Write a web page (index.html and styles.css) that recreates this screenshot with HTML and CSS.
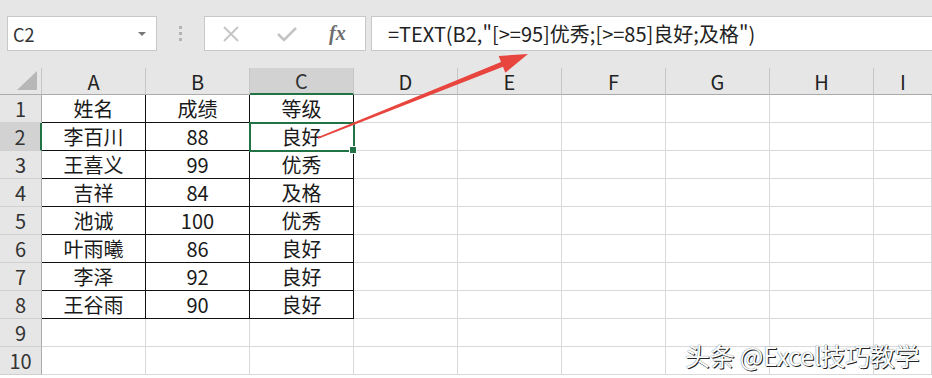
FILE: index.html
```html
<!DOCTYPE html>
<html lang="zh-CN">
<head>
<meta charset="UTF-8" />
<title>TEXT 函数 等级</title>
<link rel="stylesheet" href="styles.css">
</head>
<body>

<div class="toolbar">
  <div class="namebox">
    <span>C2</span>
    <span class="caret"></span>
  </div>
  <div class="grip"><i></i><i></i><i></i></div>
  <div class="fxbtns">
    <svg class="btn-x" width="18" height="18" viewBox="0 0 18 18"><path d="M2 2 L16 16 M16 2 L2 16" stroke="#c4c4c4" stroke-width="1.8" fill="none"/></svg>
    <svg class="btn-ok" width="22" height="18" viewBox="0 0 22 18"><path d="M2 9 L8 15 L20 3" stroke="#c4c4c4" stroke-width="2.6" fill="none"/></svg>
    <span class="fx">fx</span>
  </div>
  <div class="formula">=TEXT(B2,"[&gt;=95]优秀;[&gt;=85]良好;及格")</div>
</div>

<div class="sheet">
  <div class="corner"><span class="tri"></span></div>
  <div class="colhead">A</div>
  <div class="colhead">B</div>
  <div class="colhead sel">C</div>
  <div class="colhead">D</div>
  <div class="colhead">E</div>
  <div class="colhead">F</div>
  <div class="colhead">G</div>
  <div class="colhead">H</div>
  <div class="colhead last">I</div>

  <div class="rowhead">1</div>
  <div class="cell data">姓名</div><div class="cell data">成绩</div><div class="cell data">等级</div>
  <div class="cell"></div><div class="cell"></div><div class="cell"></div><div class="cell"></div><div class="cell"></div><div class="cell"></div>

  <div class="rowhead sel">2</div>
  <div class="cell data">李百川</div><div class="cell data">88</div><div class="cell data active">良好<span class="handle"></span></div>
  <div class="cell"></div><div class="cell"></div><div class="cell"></div><div class="cell"></div><div class="cell"></div><div class="cell"></div>

  <div class="rowhead">3</div>
  <div class="cell data">王喜义</div><div class="cell data">99</div><div class="cell data">优秀</div>
  <div class="cell"></div><div class="cell"></div><div class="cell"></div><div class="cell"></div><div class="cell"></div><div class="cell"></div>

  <div class="rowhead">4</div>
  <div class="cell data">吉祥</div><div class="cell data">84</div><div class="cell data">及格</div>
  <div class="cell"></div><div class="cell"></div><div class="cell"></div><div class="cell"></div><div class="cell"></div><div class="cell"></div>

  <div class="rowhead">5</div>
  <div class="cell data">池诚</div><div class="cell data">100</div><div class="cell data">优秀</div>
  <div class="cell"></div><div class="cell"></div><div class="cell"></div><div class="cell"></div><div class="cell"></div><div class="cell"></div>

  <div class="rowhead">6</div>
  <div class="cell data">叶雨曦</div><div class="cell data">86</div><div class="cell data">良好</div>
  <div class="cell"></div><div class="cell"></div><div class="cell"></div><div class="cell"></div><div class="cell"></div><div class="cell"></div>

  <div class="rowhead">7</div>
  <div class="cell data">李泽</div><div class="cell data">92</div><div class="cell data">良好</div>
  <div class="cell"></div><div class="cell"></div><div class="cell"></div><div class="cell"></div><div class="cell"></div><div class="cell"></div>

  <div class="rowhead">8</div>
  <div class="cell data">王谷雨</div><div class="cell data">90</div><div class="cell data">良好</div>
  <div class="cell"></div><div class="cell"></div><div class="cell"></div><div class="cell"></div><div class="cell"></div><div class="cell"></div>

  <div class="rowhead">9</div>
  <div class="cell"></div><div class="cell"></div><div class="cell"></div>
  <div class="cell"></div><div class="cell"></div><div class="cell"></div><div class="cell"></div><div class="cell"></div><div class="cell"></div>

  <div class="rowhead">10</div>
  <div class="cell"></div><div class="cell"></div><div class="cell"></div>
  <div class="cell"></div><div class="cell"></div><div class="cell"></div><div class="cell"></div><div class="cell"></div><div class="cell"></div>
</div>

<!-- 红色箭头：从 C2 指向编辑栏 -->
<svg class="arrow" width="932" height="378" viewBox="0 0 932 378">
  <polygon points="317.7,137.3 501,62 498.7,56 528,54 505.3,72.8 503,66.8 318.3,138.7" fill="#e8453f"/>
</svg>

<div class="watermark">头条 @Excel技巧教学</div>

</body>
</html>
```

FILE: styles.css
```css
body { margin: 0; width: 932px; height: 378px; overflow: hidden; background: #fff; font-family: "Noto Sans CJK SC", sans-serif; color: #222; position: relative; }

.toolbar { height: 68px; background: #e6e6e6; display: flex; align-items: flex-start; padding-top: 16px; box-sizing: border-box; }
.namebox { margin-left: 7px; width: 150px; height: 35px; box-sizing: border-box; background: #fff; border: 1px solid #c8c8c8; display: flex; align-items: center; justify-content: space-between; padding: 0 10px 0 5px; font-size: 18px; color: #333; }
.caret { width: 0; height: 0; border-left: 4px solid transparent; border-right: 4px solid transparent; border-top: 4px solid #777; }
.grip { width: 47px; height: 35px; display: flex; flex-direction: column; align-items: center; justify-content: center; gap: 3px; }
.grip i { width: 3px; height: 3px; background: #b4b4b4; }
.fxbtns { width: 162px; height: 35px; box-sizing: border-box; background: #fff; border: 1px solid #c8c8c8; display: flex; align-items: center; padding-left: 17px; }
.btn-ok { margin-left: 36px; }
.fx { margin-left: 31px; font-family: "Liberation Serif", serif; font-style: italic; font-weight: bold; font-size: 20px; color: #6e6e6e; }
.formula { flex: 1; margin-left: 5px; height: 35px; box-sizing: border-box; background: #fff; border: 1px solid #c8c8c8; border-right: none; padding-left: 16px; font-size: 20px; line-height: 33px; color: #222; white-space: nowrap; }

.sheet { display: grid; grid-template-columns: 42px repeat(8, 104px) 1fr; grid-template-rows: 27px repeat(10, 28px); }
.sheet > div { box-sizing: border-box; }
.corner { background: #e6e6e6; border-right: 1px solid #c6c6c6; border-bottom: 1px solid #ababab; position: relative; }
.tri { position: absolute; right: 4px; bottom: 4px; width: 0; height: 0; border-left: 20px solid transparent; border-bottom: 19px solid #b7b7b7; }
.colhead { background: #e6e6e6; border-right: 1px solid #c6c6c6; border-bottom: 1px solid #ababab; display: flex; align-items: center; justify-content: center; font-size: 20px; color: #222; }
.colhead.sel { background: #d2d2d2; border-bottom: 2px solid #217346; color: #333; }
.colhead.last { border-right: none; }
.rowhead { background: #e6e6e6; border-right: 1px solid #ababab; border-bottom: 1px solid #d0d0d0; display: flex; align-items: center; justify-content: center; font-size: 20px; color: #333; }
.rowhead.sel { background: #d2d2d2; border-right: 2px solid #217346; }
.cell { border-right: 1px solid #d9d9d9; border-bottom: 1px solid #d9d9d9; display: flex; align-items: center; justify-content: center; font-size: 20px; color: #1a1a1a; }
.cell.data { border-right-color: #111; border-bottom-color: #111; }
.cell.active { position: relative; outline: 2px solid #217346; outline-offset: -1px; }
.handle { position: absolute; right: -4px; bottom: -4px; width: 6px; height: 6px; background: #217346; border: 1px solid #fff; }

.arrow { position: absolute; left: 0; top: 0; pointer-events: none; }
.watermark { position: absolute; left: 685px; top: 337px; font-size: 25px; color: #fff; text-shadow: 1px 1px 0 #222, 0 0 1px #444; letter-spacing: -0.3px; }
```
